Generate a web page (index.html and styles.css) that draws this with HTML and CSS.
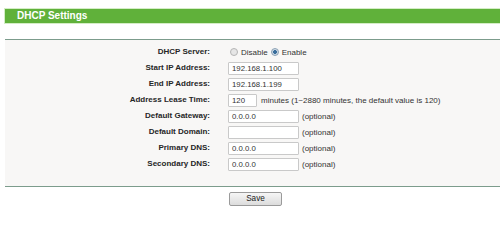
FILE: index.html
```html
<!DOCTYPE html>
<html>
<head>
<meta charset="utf-8">
<link rel="stylesheet" href="styles.css">
</head>
<body>
<div class="page">
  <div class="title-bar">DHCP Settings</div>
  <div class="rule"></div>
  <div class="form">
    <div class="label">DHCP Server:</div>
    <div class="value">
      <span class="radio"></span><span class="text">Disable</span>
      <span class="radio checked"></span><span class="text">Enable</span>
    </div>

    <div class="label">Start IP Address:</div>
    <div class="value"><span class="input">192.168.1.100</span></div>

    <div class="label">End IP Address:</div>
    <div class="value"><span class="input">192.168.1.199</span></div>

    <div class="label">Address Lease Time:</div>
    <div class="value"><span class="input short">120</span><span class="text note">minutes (1~2880 minutes, the default value is 120)</span></div>

    <div class="label">Default Gateway:</div>
    <div class="value"><span class="input">0.0.0.0</span><span class="text opt">(optional)</span></div>

    <div class="label">Default Domain:</div>
    <div class="value"><span class="input"></span><span class="text opt">(optional)</span></div>

    <div class="label">Primary DNS:</div>
    <div class="value"><span class="input">0.0.0.0</span><span class="text opt">(optional)</span></div>

    <div class="label">Secondary DNS:</div>
    <div class="value"><span class="input">0.0.0.0</span><span class="text opt">(optional)</span></div>
  </div>
  <div class="rule"></div>
  <div class="actions">
    <button class="btn">Save</button>
  </div>
</div>
</body>
</html>
```
FILE: styles.css
```css
html, body {
  margin: 0;
  padding: 0;
  background: #ffffff;
  font-family: "Liberation Sans", Arial, sans-serif;
  color: #333;
}
.page {
  margin-left: 5px;
  padding-top: 9px;
}
.title-bar {
  height: 14px;
  line-height: 14px;
  background: #60b13a;
  box-shadow: 0 0 0 1px #d4edc6;
  color: #fff;
  font-weight: bold;
  font-size: 10px;
  padding-left: 12px;
  margin-bottom: 16px;
}
.rule {
  height: 1px;
  background: #7c9c8c;
}
.form {
  background: #f8f7f6;
  padding: 4px 0 14px;
  display: grid;
  grid-template-columns: 205px 1fr;
  grid-auto-rows: 16px;
  column-gap: 18px;
}
.label {
  text-align: right;
  font-weight: bold;
  font-size: 8px;
  line-height: 16px;
  color: #262626;
  white-space: nowrap;
}
.value {
  display: flex;
  align-items: center;
  white-space: nowrap;
}
.text {
  font-size: 8px;
  color: #333;
}
.input {
  box-sizing: border-box;
  width: 71px;
  height: 13px;
  background: #fff;
  border: 1px solid #c9c9c9;
  border-radius: 1px;
  padding-left: 3px;
  font-size: 7.8px;
  line-height: 11px;
  color: #333;
}
.input.short {
  width: 29px;
}
.note {
  margin-left: 4px;
}
.opt {
  margin-left: 3px;
}
.radio {
  box-sizing: border-box;
  width: 8px;
  height: 8px;
  border-radius: 50%;
  border: 1px solid #b5b5b5;
  background: #e6e6e6;
  margin: 0 3px 0 2px;
}
.radio.checked {
  background: radial-gradient(circle, #3a6e9c 0 1.6px, #cfdbe6 2.2px);
  border-color: #8aa0b4;
  margin-left: 3px;
}
.actions {
  display: flex;
  padding-top: 5px;
  padding-left: 224px;
}
.btn {
  box-sizing: border-box;
  width: 53px;
  height: 14px;
  padding: 0;
  border: 1px solid #9a9a9a;
  border-radius: 2px;
  background: linear-gradient(#f6f6f6, #dcdcdc);
  font-family: "Liberation Sans", Arial, sans-serif;
  font-size: 8.2px;
  color: #222;
  line-height: 12px;
}
```
